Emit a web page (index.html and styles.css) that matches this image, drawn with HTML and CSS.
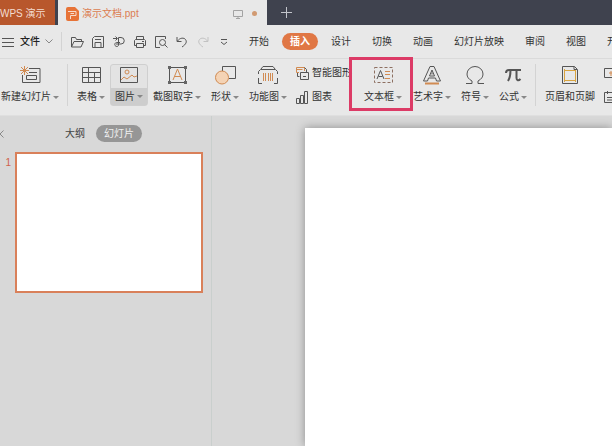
FILE: index.html
```html
<!DOCTYPE html>
<html lang="zh-CN">
<head>
    <meta charset="UTF-8">
    <meta name="viewport" content="width=device-width, initial-scale=1.0">
    <title>演示文档.ppt</title>
    <link rel="stylesheet" href="styles.css">
</head>
<body>
<div class="app">
    <header class="tabbar">
        <button class="tab tab-home">WPS 演示</button>
        <div class="tab tab-file">
            <svg class="logo" viewBox="0 0 13 14"><path d="M2 0h7l4 4v8a2 2 0 0 1-2 2H2a2 2 0 0 1-2-2V2a2 2 0 0 1 2-2z" fill="#e77337"/><path d="M2 4.500h8v4H4.500V12M4.500 6.500H8" fill="none" stroke="#f8dccb"/></svg>
            <span class="file-name">演示文档.ppt</span>
            <svg class="screen" viewBox="0 0 10 10"><path d="M.5 1.500h9v6h-9zM5 7.500v2M3 9.500h4" fill="none" stroke="#a3a3a3"/></svg>
            <span class="dot"></span>
        </div>
        <button class="new-tab" aria-label="新建"><svg viewBox="0 0 11 11"><path d="M5.500 0v11M0 5.500h11" stroke="#c3c5cb"/></svg></button>
    </header>

    <nav class="menubar">
        <button class="file-menu">
            <svg class="burger" viewBox="0 0 13 10"><path d="M0 1.500h12M0 5.500h12M0 9.500h12" class="ln"/></svg>
            <span>文件</span>
            <svg class="chevron" viewBox="0 0 8 5"><path d="M.5 .5L4 4 7.500 .5" fill="none" stroke="#888"/></svg>
        </button>
        <span class="sep sep-menu"></span>
        <div class="quick">
            <button aria-label="打开"><svg viewBox="0 0 14 14"><path class="ln" d="M1.500 12V2.500h4l1 2h5V6M1.500 12L4 6.500h9.500L11 12z"/></svg></button>
            <button aria-label="保存"><svg viewBox="0 0 14 14"><path class="ln" d="M1.500 12.500v-9l2-2h9v11zM4 12V7.500h6V12M4 4.500h6"/></svg></button>
            <button aria-label="输出"><svg viewBox="0 0 14 14"><path class="ln" d="M1 3.500h4M3.500 1.500l2 2-2 2M6.500 2.500H9a3 3 0 0 1 0 6.500H4M6.500 2.500v8a2 2 0 1 1-2-3H8"/></svg></button>
            <button aria-label="打印"><svg viewBox="0 0 14 14"><path class="ln" d="M3.500 4.500v-3h7v3M3.500 10.500h-2v-5l1-1h9l1 1v5h-2M3.500 8.500h7v4h-7zM9 6.500h2"/></svg></button>
            <button aria-label="打印预览"><svg viewBox="0 0 14 14"><path class="ln" d="M6 12.500H1.500v-11h10V4M10.500 9.500l3 3"/><circle class="ln" cx="8.500" cy="7.500" r="3"/></svg></button>
            <button aria-label="撤销"><svg viewBox="0 0 14 14"><path class="ln" d="M2 2v4.500h4.500M2.500 6C5 2.500 9 2.500 10.500 4.500S11.500 9 7 12"/></svg></button>
            <button aria-label="恢复" disabled><svg viewBox="0 0 14 14"><path d="M12 2v4.500H7.500M11.500 6C9 2.500 5 2.500 3.500 4.500S2.500 9 7 12" fill="none" stroke="#c2c2c2"/></svg></button>
            <button aria-label="更多"><svg viewBox="0 0 14 14"><path class="ln" d="M4 4.500h6M4 7l3 2.500L10 7"/></svg></button>
        </div>
        <div class="menus">
            <button>开始</button>
            <button class="active">插入</button>
            <button>设计</button>
            <button>切换</button>
            <button>动画</button>
            <button>幻灯片放映</button>
            <button>审阅</button>
            <button>视图</button>
            <button>开发工具</button>
        </div>
    </nav>

    <section class="ribbon">
        <button class="tool">
            <svg viewBox="0 0 22 20"><path class="ln" d="M10 3.500h11v14H3.500V10M7.500 10.500h10v4h-10zM10 7.500h8"/><path class="or" d="M5.500 1v9M1 5.500h9M2 2l7 7M9 2l-7 7"/></svg>
            <span class="label caret">新建幻灯片</span>
        </button>
        <span class="sep"></span>
        <button class="tool">
            <svg viewBox="0 0 22 20"><path class="ln" d="M2.500 2.500h18v15h-18zM2.500 7.500h18M2.500 12.500h18M8.500 2.500v15M14.500 7.500v10"/></svg>
            <span class="label caret">表格</span>
        </button>
        <button class="tool hover">
            <svg viewBox="0 0 22 20"><path class="ln" d="M2.500 2.500h17v15h-17z"/><circle class="or" cx="9" cy="7" r="2"/><path class="or" d="M3 15l3-3 3 2 5-4 2 2 3-1"/></svg>
            <span class="label caret">图片</span>
        </button>
        <button class="tool">
            <svg viewBox="0 0 22 20"><path class="ln" d="M3.500 2.500h16v15h-16z"/><path class="dk" d="M2 1h3v3H2zM18 1h3v3h-3zM2 16h3v3H2zM18 16h3v3h-3z"/><path class="or" d="M7 15l4.500-11L16 15M8.500 11.500h6"/></svg>
            <span class="label caret">截图取字</span>
        </button>
        <button class="tool">
            <svg viewBox="0 0 22 20"><path class="ln" d="M8.500 6V1.500h13v12H15"/><circle cx="8" cy="12.500" r="6.500" fill="#f4d3b5" stroke="#d18b52"/></svg>
            <span class="label caret">形状</span>
        </button>
        <button class="tool">
            <svg viewBox="0 0 22 20"><path class="ln" d="M4 4l2-2.500h10L18 4M1.500 9V6.500l2-2h15l2 2V9M1.500 13v5.500H5M20.500 13v5.500H17"/><path class="or" d="M6.500 8v8M8.500 8v8M11.500 8v8M13.500 8v8M15.500 8v8"/></svg>
            <span class="label caret">功能图</span>
        </button>
        <div class="stack">
            <button class="mini"><svg viewBox="0 0 14 14"><path class="or" d="M9.500 5V1.500h-8v5H4M1.500 3.500h6"/><path class="ln" d="M2.500 7v3.500h2M9.500 1.500l2 2V6M5.500 6.500h8v7h-8zM8 10.500h3"/></svg><span>智能图形</span></button>
            <button class="mini"><svg viewBox="0 0 14 14"><path class="ln" d="M1.500 8.500h3v5h-3zM5.500 5.500h3v8h-3zM9.500 1.500h3v12h-3z"/></svg><span>图表</span></button>
        </div>
        <button class="tool marked">
            <svg viewBox="0 0 22 20"><path d="M2.500 2.500h18v15h-18z" fill="none" stroke="#8d6f61" stroke-dasharray="3 2"/><path class="ln" d="M5 14l3.500-8.500L12 14M6.500 11.500h4"/><path class="or" d="M13 6.500h5M13 9.500h5M13 13.500h5"/></svg>
            <span class="label caret">文本框</span>
        </button>
        <button class="tool">
            <svg viewBox="0 0 22 20"><path class="ln" d="M9 1.500h4L19.500 16h-4l-1-3h-7l-1 3h-4zM11 5l-2.500 6h5zM11 7.500v2"/><path d="M4 18.500h14" stroke="#d18b52" stroke-width="2"/></svg>
            <span class="label caret">艺术字</span>
        </button>
        <button class="tool">
            <svg viewBox="0 0 22 20"><path class="ln" d="M2 18.500h6V16C4.500 14 3 12 3 9a8 7.500 0 0 1 16 0c0 3-1.500 5-5 7v2.500h6"/></svg>
            <span class="label caret">符号</span>
        </button>
        <button class="tool">
            <svg viewBox="0 0 22 20"><path d="M4 8c0-2 1-3 3-3h12M8.500 5c0 5-.5 8-2.500 11M14.500 5v8c0 2.500 2 3 4 1" fill="none" stroke="#555" stroke-width="2"/></svg>
            <span class="label caret">公式</span>
        </button>
        <span class="sep"></span>
        <button class="tool">
            <svg viewBox="0 0 22 20"><path class="ln" d="M3.500 1.500h12l3 3v14h-15zM15 1.500v3h3"/><path d="M5 5.500h12M5 15.500h12M5.500 4v13M16.500 5v12" fill="none" stroke="#d9a441"/></svg>
            <span class="label">页眉和页脚</span>
        </button>
        <div class="stack">
            <button class="mini" aria-label="幻灯片编号"><svg viewBox="0 0 14 14"><path class="ln" d="M1.500 2.500h12v9h-12z"/><path class="or" d="M6 7h4M8 5v5"/></svg></button>
            <button class="mini" aria-label="日期和时间"><svg viewBox="0 0 14 14"><path class="ln" d="M1.500 2.500h12v10h-12zM4.500 1v3M10.500 1v3M4 7.500h6M4 10h6"/></svg></button>
        </div>
    </section>

    <main class="workspace">
        <aside class="panel">
            <div class="panel-tabs">
                <button class="collapse" aria-label="收起"><svg viewBox="0 0 4 8"><path d="M3.500 .5L0 4l3.500 3.500" fill="none" stroke="#888"/></svg></button>
                <button class="outline">大纲</button>
                <button class="slides">幻灯片</button>
            </div>
            <div class="thumb-row">
                <span class="num">1</span>
                <div class="thumb"></div>
            </div>
        </aside>
        <div class="canvas"><div class="sheet"></div></div>
    </main>
</div>
</body>
</html>
```
FILE: styles.css
```css
* { box-sizing: border-box; }
body { margin: 0; font-family: "Liberation Sans", "Noto Sans CJK SC", sans-serif; font-size: 10px; line-height: 14px; color: #333; }
button { font: inherit; color: inherit; background: none; border: none; padding: 0; white-space: nowrap; flex-shrink: 0; }
svg { display: block; flex-shrink: 0; }

.app { display: flex; flex-direction: column; height: 100vh; overflow: hidden; background: #d8d8d8; }
.ln { fill: none; stroke: #555; }
.or { fill: none; stroke: #d18b52; }
.dk { fill: #666; }
.sep { flex-shrink: 0; width: 1px; background: #d3d3d3; }

/* tabs */
.tabbar { display: flex; flex-shrink: 0; height: 25px; background: #3f424e; }
.tab-home { width: 55px; margin-right: 3px; padding-top: 2px; background: #b8572c; color: #f3ddd2; text-align: left; }
.tab-file { display: flex; align-items: center; width: 209px; padding: 2px 10px 0 8px; background: #e8e8e8; color: #dc7d51; }
.logo { width: 13px; height: 14px; margin-right: 3px; }
.file-name { flex: 1; }
.screen { width: 10px; height: 10px; margin-right: 9px; }
.dot { width: 5px; height: 5px; border-radius: 50%; background: #d19a72; }
.new-tab { padding: 0 14px; }
.new-tab svg { width: 11px; height: 11px; }

/* menu row */
.menubar { display: flex; flex-shrink: 0; align-items: center; height: 33px; background: #e8e8e8; }
.file-menu { display: flex; align-items: center; gap: 5px; padding-left: 2px; font-weight: 500; color: #222; }
.burger { width: 13px; height: 10px; }
.chevron { width: 8px; height: 5px; }
.sep-menu { height: 19px; margin: 0 8px; }
.quick { display: flex; gap: 7px; }
.quick svg { width: 14px; height: 14px; }
.menus { display: flex; gap: 5px; margin-left: 10px; }
.menus button { height: 17px; padding: 0 8px; border-radius: 9px; }
.menus .active { background: #e07745; color: #fff; font-weight: 700; }

/* ribbon */
.ribbon { display: flex; flex-shrink: 0; height: 58px; padding: 5px 0 9px; margin-left: -4px; background: #e8e8e8; border-top: 1px solid #dadada; border-bottom: 1px solid #dfdfdf; }
.ribbon .sep { margin: 0 4px 0 3px; }
.tool { display: flex; flex-direction: column; align-items: center; padding: 0 1px; border-radius: 3px; }
.tool svg { width: 22px; height: 20px; margin: 1px 0 3px; }
.label { flex: 1; display: flex; align-items: center; padding: 0 4px; }
.caret::after { content: ""; margin-left: 2px; border: solid transparent; border-width: 3px 3px 0; border-top-color: #888; }
.tool.hover { padding: 0; background: linear-gradient(#e3e3e3 23px, #cdcdcd 23px); border: 1px solid #cfcfcf; }
.tool.hover svg { margin-top: 0; }
.stack { display: flex; flex-direction: column; justify-content: space-between; padding: 2px 5px 2px 3px; }
.mini { display: flex; align-items: center; gap: 3px; height: 14px; }
.mini svg { width: 14px; height: 14px; }
.marked { position: relative; margin: 0 1px 0 2px; }
.marked::after { content: ""; position: absolute; inset: -7px -6px -5px -10px; border: 3px solid #dc3b66; }

/* slide panel and canvas */
.workspace { display: flex; flex: 1; min-height: 0; }
.panel { flex-shrink: 0; width: 212px; border-right: 1px solid #c9cfcd; padding: 9px 8px 0 0; }
.panel-tabs { display: flex; align-items: center; height: 17px; color: #444; }
.collapse svg { width: 4px; height: 8px; }
.outline { margin: 0 11px 0 61px; }
.slides { height: 17px; padding: 0 8px; border-radius: 9px; background: #969696; color: #f0f0f0; }
.thumb-row { display: flex; margin-top: 10px; }
.num { width: 15px; padding: 4px 4px 0 0; text-align: right; color: #d0624b; }
.thumb { flex: 1; aspect-ratio: 4 / 3; background: #fff; border: 2px solid #d9805a; }
.canvas { flex: 1; display: flex; padding: 12px 0 0 93px; overflow: hidden; }
.sheet { flex: 1; background: #fff; box-shadow: 0 0 9px rgba(0, 0, 0, .35); }
```
